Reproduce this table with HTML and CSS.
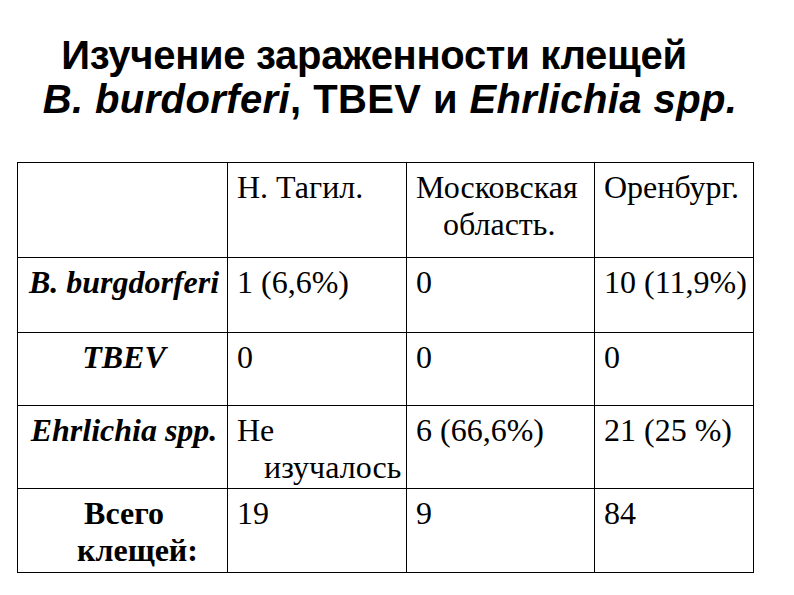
FILE: index.html
```html
<!DOCTYPE html>
<html lang="ru">
<head>
<meta charset="utf-8">
<title>Изучение зараженности клещей</title>
<link rel="stylesheet" href="styles.css">
</head>
<body>
<div class="slide">
  <h1 class="title">
    <span class="line line1">Изучение зараженности клещей</span>
    <span class="line line2"><i>B. burdorferi</i>, TBEV и <i>Ehrlichia spp.</i></span>
  </h1>
  <table class="data">
    <colgroup>
      <col class="c1"><col class="c2"><col class="c3"><col class="c4">
    </colgroup>
    <tr class="r-head">
      <td class="label"></td>
      <td>Н. Тагил.</td>
      <td>Московская область.</td>
      <td>Оренбург.</td>
    </tr>
    <tr class="r-b">
      <td class="label"><b><i>B. burgdorferi</i></b></td>
      <td>1 (6,6%)</td>
      <td>0</td>
      <td>10 (11,9%)</td>
    </tr>
    <tr class="r-t">
      <td class="label"><b><i>TBEV</i></b></td>
      <td>0</td>
      <td>0</td>
      <td>0</td>
    </tr>
    <tr class="r-e">
      <td class="label"><b><i>Ehrlichia spp.</i></b></td>
      <td>Не изучалось</td>
      <td>6 (66,6%)</td>
      <td>21 (25 %)</td>
    </tr>
    <tr class="r-total">
      <td class="label"><b>Всего клещей:</b></td>
      <td>19</td>
      <td>9</td>
      <td>84</td>
    </tr>
  </table>
</div>
</body>
</html>
```
FILE: styles.css
```css
html, body {
  margin: 0;
  padding: 0;
  background: #ffffff;
}

.slide {
  width: 794px;
  height: 595px;
  box-sizing: border-box;
  padding: 33px 0 0 17px;
  color: #000;
  overflow: hidden;
}

.title {
  margin: 0;
  width: 736px;
  font-family: "Liberation Sans", Arial, sans-serif;
  font-weight: bold;
  font-size: 40px;
  line-height: 44px;
  text-align: center;
}

.title .line {
  display: block;
}

.title .line1 {
  letter-spacing: -0.3px;
  padding-right: 22px;
}

.title .line2 {
  letter-spacing: 0.4px;
  padding-left: 10px;
}

.data {
  margin-top: 41px;
  width: 736px;
  table-layout: fixed;
  border-collapse: collapse;
  font-family: "Liberation Serif", "Times New Roman", serif;
  font-size: 32px;
  line-height: 37px;
}

.c1 { width: 210px; }
.c2 { width: 179px; }
.c3 { width: 188px; }
.c4 { width: 159px; }

.data td {
  border: 1px solid #000;
  vertical-align: top;
  padding: 6px 6px 0 36px;
  text-indent: -27px;
  text-align: left;
}

.data td.label {
  text-align: center;
}

.r-head { height: 95px; }
.r-b { height: 75px; }
.r-t { height: 73px; }
.r-e { height: 83px; }
.r-total { height: 84px; }
```
